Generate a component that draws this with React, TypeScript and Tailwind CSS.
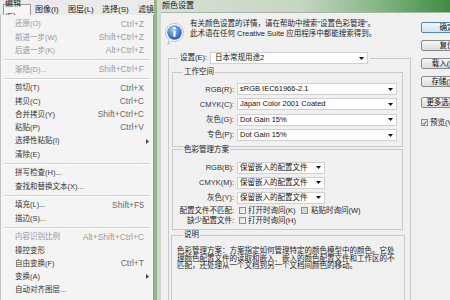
import React from "react";

type Item = { t: string; k?: string; d?: boolean; sub?: boolean } | null;

const items: Item[] = [
  { t: "还原(O)", k: "Ctrl+Z", d: true },
  { t: "前进一步(W)", k: "Shift+Ctrl+Z", d: true },
  { t: "后退一步(K)", k: "Alt+Ctrl+Z", d: true },
  null,
  { t: "渐隐(D)...", k: "Shift+Ctrl+F", d: true },
  null,
  { t: "剪切(T)", k: "Ctrl+X" },
  { t: "拷贝(C)", k: "Ctrl+C" },
  { t: "合并拷贝(Y)", k: "Shift+Ctrl+C" },
  { t: "粘贴(P)", k: "Ctrl+V" },
  { t: "选择性粘贴(I)", sub: true },
  { t: "清除(E)" },
  null,
  { t: "拼写检查(H)..." },
  { t: "查找和替换文本(X)..." },
  null,
  { t: "填充(L)...", k: "Shift+F5" },
  { t: "描边(S)..." },
  null,
  { t: "内容识别比例", k: "Alt+Shift+Ctrl+C", d: true },
  { t: "操控变形" },
  { t: "自由变换(F)", k: "Ctrl+T" },
  { t: "变换(A)", sub: true },
  { t: "自动对齐图层..." },
];

function Arrow() {
  return (
    <svg width="5" height="3" viewBox="0 0 5 3" className="shrink-0">
      <path d="M0 0h5L2.5 3z" fill="#111" />
    </svg>
  );
}

function Select({ w, pl, children }: { w: string; pl?: string; children: React.ReactNode }) {
  return (
    <div className={`flex h-[12px] shrink-0 items-center border border-[#d0d0d0] bg-white pr-[3px] text-[7.5px] text-[#111] ${w} ${pl ?? "pl-[2px]"}`}>
      <span className="flex-1 truncate leading-[10px]">{children}</span>
      <Arrow />
    </div>
  );
}

function Check({ on, gray }: { on?: boolean; gray?: boolean }) {
  return (
    <div
      className={`flex h-[7px] w-[7px] shrink-0 items-center justify-center border border-[#8e8f8f] ${
        gray ? "bg-[#d6d6d6]" : "bg-gradient-to-br from-[#dedede] to-[#fafafa]"
      }`}
    >
      {on && (
        <svg width="6" height="6" viewBox="0 0 6 6">
          <path d="M0.8 3.2 2.4 4.8 5.3 1" fill="none" stroke="#2b4f86" strokeWidth="1.2" />
        </svg>
      )}
    </div>
  );
}

function InfoIcon() {
  return (
    <svg width="19" height="22" viewBox="0 0 19 22" className="shrink-0">
      <defs>
        <radialGradient id="ib" cx="40%" cy="30%" r="75%">
          <stop offset="0" stopColor="#9ccaf6" />
          <stop offset="1" stopColor="#1a55b3" />
        </radialGradient>
      </defs>
      <path
        d="M9.5 0.5A9 9 0 1 1 6 17.8L3 21.5 3.8 16.3A9 9 0 0 1 9.5 0.5Z"
        fill="#fff"
        stroke="#a3b0c0"
        strokeWidth="0.8"
      />
      <circle cx="9.5" cy="9.5" r="7.3" fill="url(#ib)" />
      <circle cx="9.5" cy="5.3" r="1.3" fill="#fff" />
      <rect x="8.4" y="7.5" width="2.2" height="6.3" rx="0.6" fill="#fff" />
    </svg>
  );
}

function Btn({ children, main }: { children: React.ReactNode; main?: boolean }) {
  return (
    <div
      className={`h-[11px] w-[52px] shrink-0 rounded-[2px] border text-center text-[7.5px] leading-[9px] text-[#111] bg-gradient-to-b ${
        main ? "border-[#4c87bb] from-[#f3f8fc] to-[#d3e2ee]" : "border-[#8a8a8a] from-[#f7f7f7] to-[#dadada]"
      }`}
    >
      {children}
    </div>
  );
}

export default function App() {
  return (
    <div className="flex h-[300px] w-[450px] overflow-hidden bg-[#f0f0f0] font-['Liberation_Sans','Noto_Sans_CJK_SC',sans-serif]">
      {/* edit menu */}
      <div className="flex w-[154px] shrink-0 flex-col">
        <div className="flex h-[15px] shrink-0 items-end bg-[#eaeaea] text-[8px] text-[#222]">
          <div className="ml-[3px] flex h-[11px] w-[33px] items-center border border-b-0 border-[#9c9c9c] bg-[#f7f7f7] pl-[1px]">
            编辑(E)
          </div>
          <div className="flex h-[11px] items-center">
            <span className="ml-[4px] w-[33px]">图像(I)</span>
            <span className="w-[34px]">图层(L)</span>
            <span className="w-[36px]">选择(S)</span>
            <span className="whitespace-nowrap">滤镜</span>
          </div>
        </div>
        <div className="flex-1 border-l border-r border-[#9a9a9a] border-l-[#c4c4c4] bg-[#f4f4f4] pt-[2.4px]">
          {items.map((it, i) =>
            it === null ? (
              <div key={i} className="flex h-[5.5px] items-center px-[3px]">
                <div className="h-px w-full bg-[#d2d2d2] shadow-[0_1px_0_#ffffff]" />
              </div>
            ) : (
              <div key={i} className="flex h-[13.25px] items-center pl-[14px] pr-[9px]">
                <span className={`flex-1 whitespace-nowrap text-[7.5px] ${it.d ? "text-[#969696]" : "text-[#363636]"}`}>
                  {it.t}
                </span>
                {it.k && (
                  <span className={`whitespace-nowrap text-[8.5px] ${it.d ? "text-[#9c9c9c]" : "text-[#6a6a6a]"}`}>{it.k}</span>
                )}
                {it.sub && (
                  <svg width="3" height="5" viewBox="0 0 3 5" className="mr-[-5px]">
                    <path d="M0 0 3 2.5 0 5z" fill="#444" />
                  </svg>
                )}
              </div>
            )
          )}
        </div>
      </div>

      <div className="w-[3px] shrink-0 bg-[#93b68f]" />

      {/* color settings dialog */}
      <div className="flex min-w-0 flex-1 flex-col border-l-[4px] border-[#d0dacd]">
        <div className="flex h-[13px] shrink-0 items-center border-b border-[#a9b8a6] bg-[linear-gradient(to_right,#d7e0d4_0%,#c6d6c2_48%,#86b685_75%,#3f8c43_100%)] pl-[1px] text-[8px] text-[#1a1a1a]">
          颜色设置
        </div>

        <div className="flex flex-1 text-[#1e1e1e]">
          <div className="w-[251px] shrink-0">
            <div className="flex h-[39px] pl-[4px]">
              <div className="mt-[10px]">
                <InfoIcon />
              </div>
              <div className="ml-[6px] mt-[6px] whitespace-nowrap text-[7.5px] leading-[10px]">
                <div>有关颜色设置的详情，请在帮助中搜索“设置色彩管理”。</div>
                <div>此术语在任何 Creative Suite 应用程序中都能搜索得到。</div>
              </div>
            </div>

            <fieldset className="ml-[7px] w-[243px] border border-[#c9c9c9]">
              <legend className="ml-[9px] px-[2px]">
                <div className="flex h-[12px] items-center text-[7.5px]">
                  <span className="whitespace-nowrap">设置(E):</span>
                  <div className="ml-[3px]">
                    <Select w="w-[158px]" pl="pl-[4px]">日本常规用途2</Select>
                  </div>
                </div>
              </legend>

              <fieldset className="ml-[3px] mt-[5px] w-[231px] border border-[#c9c9c9] pb-[3.3px]">
                <legend className="ml-[10px] h-[6px] px-[1px] text-[7.5px] leading-[6px]">工作空间</legend>
                <div className="pt-[6.5px] text-[7.5px]">
                  {[
                    ["RGB(R):", "sRGB IEC61966-2.1"],
                    ["CMYK(C):", "Japan Color 2001 Coated"],
                    ["灰色(G):", "Dot Gain 15%"],
                    ["专色(P):", "Dot Gain 15%"],
                  ].map(([l, v]) => (
                    <div key={l} className="flex h-[15.3px] items-center">
                      <span className="w-[61px] whitespace-nowrap text-right text-[#333]">{l}</span>
                      <div className="ml-[3px]">
                        <Select w="w-[160px]">{v}</Select>
                      </div>
                    </div>
                  ))}
                </div>
              </fieldset>

              <fieldset className="ml-[3px] w-[231px] border border-[#c9c9c9] pb-[4px]">
                <legend className="ml-[10px] h-[6px] px-[1px] text-[7.5px] leading-[6px]">色彩管理方案</legend>
                <div className="pt-[7.5px] text-[7.5px]">
                  {["RGB(B):", "CMYK(M):", "灰色(Y):"].map((l) => (
                    <div key={l} className="flex h-[15px] items-center">
                      <span className="w-[61px] whitespace-nowrap text-right text-[#333]">{l}</span>
                      <div className="ml-[3px]">
                        <Select w="w-[88px]">保留嵌入的配置文件</Select>
                      </div>
                    </div>
                  ))}
                  <div className="flex h-[10px] items-center">
                    <span className="w-[61px] whitespace-nowrap text-right">配置文件不匹配:</span>
                    <div className="ml-[5px]">
                      <Check />
                    </div>
                    <span className="ml-[2px] w-[53px] whitespace-nowrap">打开时询问(K)</span>
                    <Check gray />
                    <span className="ml-[3px] whitespace-nowrap">粘贴时询问(W)</span>
                  </div>
                  <div className="flex h-[10px] items-center">
                    <span className="w-[61px] whitespace-nowrap text-right">缺少配置文件:</span>
                    <div className="ml-[5px]">
                      <Check />
                    </div>
                    <span className="ml-[2px] whitespace-nowrap">打开时询问(H)</span>
                  </div>
                </div>
              </fieldset>

              <fieldset className="ml-[2px] mt-[2px] w-[234px] border border-[#c9c9c9] pb-[40px]">
                <legend className="ml-[11px] h-[6px] px-[1px] text-[7.5px] leading-[6px]">说明</legend>
                <div className="whitespace-nowrap pl-[5px] pt-[9px] text-[7.5px] leading-[7.5px]">
                  <div>色彩管理方案：方案指定如何管理特定的颜色模型中的颜色。它处</div>
                  <div>理颜色配置文件的读取和嵌入、嵌入的颜色配置文件和工作区的不</div>
                  <div>匹配，还处理从一个文档到另一个文档间颜色的移动。</div>
                </div>
              </fieldset>
            </fieldset>
          </div>

          <div className="flex flex-col items-start pl-[9px] pt-[9px] text-[7.5px]">
            <Btn main>确定</Btn>
            <div className="mt-[7px]">
              <Btn>复位</Btn>
            </div>
            <div className="mt-[7px]">
              <Btn>载入(L)...</Btn>
            </div>
            <div className="mt-[7px]">
              <Btn>存储(S)...</Btn>
            </div>
            <div className="mt-[10px]">
              <Btn>更多选项(M)</Btn>
            </div>
            <div className="mt-[9px] flex items-center">
              <Check on />
              <span className="ml-[2px] whitespace-nowrap">预览(V)</span>
            </div>
          </div>
        </div>
      </div>
    </div>
  );
}
